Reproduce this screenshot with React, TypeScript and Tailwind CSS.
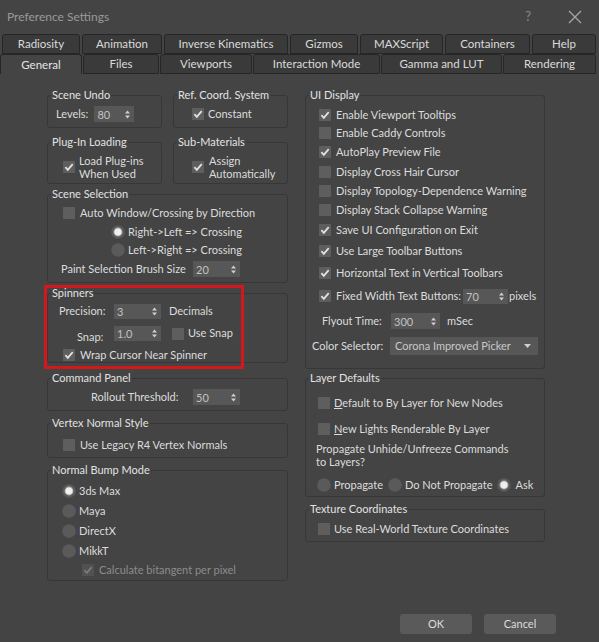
import React from "react";

function Check({ on = false, disabled = false }: { on?: boolean; disabled?: boolean }) {
  return (
    <svg width="12" height="12" viewBox="0 0 12 12" className="shrink-0">
      <rect width="12" height="12" rx="0.5" fill={disabled ? "#515151" : "#5e5e5e"} />
      {on && (
        <path
          d="M2.4 6.2 4.8 8.8 9.7 3.1"
          fill="none"
          stroke={disabled ? "#7a7a7a" : "#e2e2e2"}
          strokeWidth="1.8"
        />
      )}
    </svg>
  );
}

function Radio({ on = false }: { on?: boolean }) {
  return (
    <svg width="14" height="14" viewBox="0 0 14 14" className="shrink-0">
      <circle cx="7" cy="7" r="6.8" fill="#5a5a5a" />
      {on && <circle cx="7" cy="7" r="4.4" fill="#bdbdbd" />}
      {on && <circle cx="7" cy="7" r="3.3" fill="#f0f0f0" />}
    </svg>
  );
}

function Arrows() {
  return (
    <svg width="5" height="9" viewBox="0 0 5 9" className="shrink-0">
      <path d="M0 3.6 2.5 0.6 5 3.6Z M0 5.4 2.5 8.4 5 5.4Z" fill="#cfcfcf" />
    </svg>
  );
}

function Spinner({ value, className }: { value: string; className: string }) {
  return (
    <div className={`flex shrink-0 items-center bg-[#575757] pl-[3px] pr-[4px] text-[#c2c2c2] ${className}`}>
      <span className="flex-1 leading-none">{value}</span>
      <Arrows />
    </div>
  );
}

function Box({
  title,
  className,
  children,
}: {
  title: string;
  className: string;
  children?: React.ReactNode;
}) {
  return (
    <div className={`flex flex-col rounded-[3px] border border-[#373737] ${className}`}>
      <div className="-mt-[8px] ml-[3px] self-start bg-[#444444] px-[1px] leading-[14px] text-[#e2e2e2]">
        {title}
      </div>
      {children}
    </div>
  );
}

function Tab({ label, className }: { label: string; className: string }) {
  return (
    <div
      className={`flex h-full items-center justify-center rounded-t-[3px] border border-[#262626] bg-[#3a3a3a] text-[11.5px] text-[#dadada] ${className}`}
    >
      {label}
    </div>
  );
}

export default function App() {
  return (
    <div className="flex h-[642px] w-[599px] flex-col overflow-hidden bg-[#444444] font-['Lato',sans-serif] text-[11px] text-[#dcdcdc]">
      {/* title bar */}
      <div className="flex h-[34px] shrink-0 items-center pl-[7px] pr-[17px]">
        <span className="text-[12px] text-[#9a9a9a]">Preference Settings</span>
        <span className="ml-auto mr-[37px] text-[13px] text-[#8a8a8a]">?</span>
        <svg width="14" height="14" viewBox="0 0 14 14">
          <path d="M1 1 13 13 M13 1 1 13" stroke="#a6a6a6" strokeWidth="1.3" />
        </svg>
      </div>

      {/* tabs */}
      <div className="flex h-[20px] shrink-0 gap-[2px] pl-[2px]">
        <Tab label="Radiosity" className="w-[78px]" />
        <Tab label="Animation" className="w-[80px]" />
        <Tab label="Inverse Kinematics" className="w-[124px]" />
        <Tab label="Gizmos" className="w-[68px]" />
        <Tab label="MAXScript" className="w-[83px]" />
        <Tab label="Containers" className="w-[85px]" />
        <Tab label="Help" className="w-[64px]" />
      </div>
      <div className="flex h-[20px] shrink-0 gap-[1px]">
        <div className="flex h-full w-[82px] items-center justify-center rounded-t-[3px] border border-b-0 border-[#262626] bg-[#444444] text-[11.5px] text-[#e4e4e4]">
          General
        </div>
        <Tab label="Files" className="w-[76px]" />
        <Tab label="Viewports" className="w-[92px]" />
        <Tab label="Interaction Mode" className="w-[127px]" />
        <Tab label="Gamma and LUT" className="w-[121px]" />
        <Tab label="Rendering" className="w-[93px]" />
      </div>

      {/* body */}
      <div className="flex flex-1 gap-[17px] pl-[47px] pt-[21px]">
        {/* left column */}
        <div className="flex w-[241px] flex-col">
          <div className="flex gap-[11px]">
            <Box title="Scene Undo" className="h-[33px] w-[115px]">
              <div className="mt-[4px] flex h-[16px] items-center gap-[6px] pl-[8px]">
                <span>Levels:</span>
                <Spinner value="80" className="h-[16px] w-[40px]" />
              </div>
            </Box>
            <Box title="Ref. Coord. System" className="h-[33px] w-[115px]">
              <div className="mt-[4px] flex h-[16px] items-center gap-[4px] pl-[18px]">
                <Check on />
                <span>Constant</span>
              </div>
            </Box>
          </div>

          <div className="mt-[14px] flex gap-[11px]">
            <Box title="Plug-In Loading" className="h-[42px] w-[115px]">
              <div className="mt-[5px] flex items-center gap-[4px] pl-[15px]">
                <Check on />
                <span className="leading-[13px]">
                  Load Plug-ins
                  <br />
                  When Used
                </span>
              </div>
            </Box>
            <Box title="Sub-Materials" className="h-[42px] w-[115px]">
              <div className="mt-[5px] flex items-center gap-[5px] pl-[18px]">
                <Check on />
                <span className="leading-[13px]">
                  Assign
                  <br />
                  Automatically
                </span>
              </div>
            </Box>
          </div>

          <Box title="Scene Selection" className="mt-[10px] h-[89px]">
            <div className="mt-[4px] flex h-[16px] items-center gap-[5px] pl-[15px]">
              <Check />
              <span>Auto Window/Crossing by Direction</span>
            </div>
            <div className="mt-[2px] flex h-[18px] items-center gap-[3px] pl-[63px]">
              <Radio on />
              <span>Right-&gt;Left =&gt; Crossing</span>
            </div>
            <div className="flex h-[18px] items-center gap-[3px] pl-[63px]">
              <Radio />
              <span>Left-&gt;Right =&gt; Crossing</span>
            </div>
            <div className="mt-[2px] flex h-[16px] items-center pl-[13px]">
              <span className="w-[132px]">Paint Selection Brush Size</span>
              <Spinner value="20" className="h-[16px] w-[47px]" />
            </div>
          </Box>

          <Box title="Spinners" className="relative mt-[10px] h-[70px]">
            <div className="mt-[4px] flex h-[15px] items-center pl-[11px]">
              <span className="w-[55px]">Precision:</span>
              <Spinner value="3" className="h-[15px] w-[47px]" />
              <span className="ml-[8px]">Decimals</span>
            </div>
            <div className="mt-[7px] flex h-[15px] items-center pl-[11px]">
              <span className="mt-[8px] w-[55px] pl-[18px]">Snap:</span>
              <Spinner value="1.0" className="h-[15px] w-[47px]" />
              <span className="ml-[11px] flex items-center gap-[4px]">
                <Check />
                Use Snap
              </span>
            </div>
            <div className="mt-[7px] flex h-[14px] items-center gap-[5px] pl-[15px]">
              <Check on />
              <span>Wrap Cursor Near Spinner</span>
            </div>
            <div className="absolute -left-[4px] -top-[9px] h-[84px] w-[200px] border-[3px] border-[#d3181c]" />
          </Box>

          <Box title="Command Panel" className="mt-[15px] h-[33px]">
            <div className="mt-[4px] flex h-[16px] items-center pl-[43px]">
              <span className="w-[102px]">Rollout Threshold:</span>
              <Spinner value="50" className="h-[16px] w-[47px]" />
            </div>
          </Box>

          <Box title="Vertex Normal Style" className="mt-[12px] h-[35px]">
            <div className="mt-[8px] flex h-[14px] items-center gap-[5px] pl-[15px]">
              <Check />
              <span>Use Legacy R4 Vertex Normals</span>
            </div>
          </Box>

          <Box title="Normal Bump Mode" className="mt-[12px] h-[111px]">
            <div className="mt-[4px] flex flex-col pl-[14px]">
              {["3ds Max", "Maya", "DirectX", "MikkT"].map((m, i) => (
                <div key={m} className="flex h-[20px] items-center gap-[3px]">
                  <Radio on={i === 0} />
                  <span>{m}</span>
                </div>
              ))}
            </div>
            <div className="flex h-[18px] items-center gap-[5px] pl-[34px] text-[#8c8c8c]">
              <Check on disabled />
              <span>Calculate bitangent per pixel</span>
            </div>
          </Box>
        </div>

        {/* right column */}
        <div className="flex w-[240px] flex-col">
          <Box title="UI Display" className="h-[274px]">
            <div className="mt-[4px] flex flex-col pl-[13px]">
              <div className="flex h-[18px] items-center gap-[5px]">
                <Check on />
                <span>Enable Viewport Tooltips</span>
              </div>
              <div className="flex h-[18px] items-center gap-[5px]">
                <Check />
                <span>Enable Caddy Controls</span>
              </div>
              <div className="flex h-[20px] items-center gap-[5px]">
                <Check on />
                <span>AutoPlay Preview File</span>
              </div>
              <div className="flex h-[20px] items-center gap-[5px]">
                <Check />
                <span>Display Cross Hair Cursor</span>
              </div>
              <div className="flex h-[18px] items-center gap-[5px]">
                <Check />
                <span>Display Topology-Dependence Warning</span>
              </div>
              <div className="flex h-[20px] items-center gap-[5px]">
                <Check />
                <span>Display Stack Collapse Warning</span>
              </div>
              <div className="flex h-[20px] items-center gap-[5px]">
                <Check on />
                <span>Save UI Configuration on Exit</span>
              </div>
              <div className="flex h-[22px] items-center gap-[5px]">
                <Check on />
                <span>Use Large Toolbar Buttons</span>
              </div>
              <div className="flex h-[22px] items-center gap-[5px]">
                <Check on />
                <span>Horizontal Text in Vertical Toolbars</span>
              </div>
              <div className="flex h-[24px] items-center gap-[5px]">
                <Check on />
                <span>Fixed Width Text Buttons:</span>
                <Spinner value="70" className="-ml-[3px] h-[15px] w-[45px]" />
                <span className="-ml-[4px]">pixels</span>
              </div>
            </div>
            <div className="mt-[5px] flex h-[16px] items-center pl-[16px]">
              <span className="w-[69px]">Flyout Time:</span>
              <Spinner value="300" className="h-[16px] w-[49px]" />
              <span className="ml-[7px]">mSec</span>
            </div>
            <div className="mt-[8px] flex h-[18px] items-center pl-[6px]">
              <span className="w-[78px]">Color Selector:</span>
              <div className="flex h-[18px] w-[148px] items-center bg-[#575757] pl-[5px] pr-[7px] text-[#c8c8c8]">
                <span className="flex-1">Corona Improved Picker</span>
                <svg width="7" height="4" viewBox="0 0 7 4">
                  <path d="M0 0 7 0 3.5 4Z" fill="#d0d0d0" />
                </svg>
              </div>
            </div>
          </Box>

          <Box title="Layer Defaults" className="mt-[9px] h-[119px]">
            <div className="mt-[9px] flex h-[18px] items-center gap-[4px] pl-[12px]">
              <Check />
              <span>
                <span className="underline">D</span>efault to By Layer for New Nodes
              </span>
            </div>
            <div className="mt-[8px] flex h-[18px] items-center gap-[4px] pl-[12px]">
              <Check />
              <span>
                <span className="underline">N</span>ew Lights Renderable By Layer
              </span>
            </div>
            <div className="mt-[4px] pl-[10px] leading-[13px]">
              Propagate Unhide/Unfreeze Commands
              <br />
              to Layers?
            </div>
            <div className="mt-[8px] flex h-[18px] items-center pl-[11px]">
              <Radio />
              <span className="ml-[3px]">Propagate</span>
              <span className="ml-[5px]">
                <Radio />
              </span>
              <span className="ml-[3px]">Do Not Propagate</span>
              <span className="ml-[5px]">
                <Radio on />
              </span>
              <span className="ml-[4px]">Ask</span>
            </div>
          </Box>

          <Box title="Texture Coordinates" className="mt-[12px] h-[33px]">
            <div className="mt-[5px] flex h-[16px] items-center gap-[4px] pl-[12px]">
              <Check />
              <span>Use Real-World Texture Coordinates</span>
            </div>
          </Box>
        </div>
      </div>

      {/* footer buttons */}
      <div className="flex shrink-0 justify-end gap-[12px] pb-[8px] pr-[43px]">
        <button className="flex h-[20px] w-[72px] items-center justify-center rounded-[3px] bg-[#5a5a5a] text-[#dcdcdc]">
          OK
        </button>
        <button className="flex h-[20px] w-[72px] items-center justify-center rounded-[3px] bg-[#5a5a5a] text-[#dcdcdc]">
          Cancel
        </button>
      </div>
    </div>
  );
}
